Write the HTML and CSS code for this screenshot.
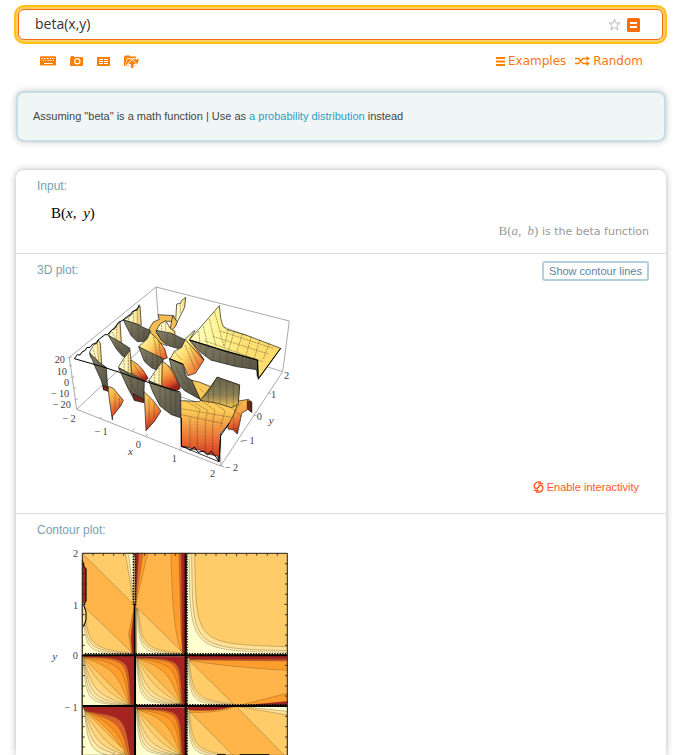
FILE: index.html
```html
<!DOCTYPE html>
<html lang="en">
<head>
<meta charset="utf-8">
<title>beta(x,y)</title>
<link rel="stylesheet" href="styles.css">
</head>
<body>
<header class="top">
  <form class="query">
    <input class="query-input" type="text" value="beta(x,y)" aria-label="Query">
    <button class="icon-button" type="button" aria-label="Add to favorites">
      <svg width="13" height="13" viewBox="0 0 13 13"><path d="M6.5 1L8 5H12L8.8 7.5L10 12L6.5 9.3L3 12L4.2 7.5L1 5H5Z" fill="none" stroke="#bbb"/></svg>
    </button>
    <button class="icon-button" type="submit" aria-label="Compute">
      <svg width="13" height="14" viewBox="0 0 13 14"><rect width="13" height="14" rx="1.5" fill="#ff6d00"/><path d="M3 5H10M3 9H10" stroke="#fff" stroke-width="2"/></svg>
    </button>
  </form>
  <nav class="tools">
    <div class="tool-icons">
      <button class="icon-button" type="button" aria-label="Extended keyboard">
        <svg width="16" height="10" viewBox="0 0 16 10"><rect y=".3" width="16" height="9.2" rx="1" fill="#ff7f00"/><path d="M1.5 2.5H15M2.5 4.5H14" stroke="#fff" stroke-dasharray="1.4 1.3"/><path d="M4 7.5H12.5" stroke="#fff"/></svg>
      </button>
      <button class="icon-button" type="button" aria-label="Image input">
        <svg width="13" height="10" viewBox="0 0 13 10"><path d="M0 2Q0 1 1 1V0H4V1H12Q13 1 13 2V9Q13 10 12 10H1Q0 10 0 9Z" fill="#ff7f00"/><circle cx="7.3" cy="5.3" r="2.6" fill="none" stroke="#fff" stroke-width="1.2"/></svg>
      </button>
      <button class="icon-button" type="button" aria-label="Data input">
        <svg width="13" height="9" viewBox="0 0 13 9"><path d="M0 0H13V9H0Z" fill="#ff7f00"/><path d="M2 2.5H6M7 2.5H11M2 4.5H6M7 4.5H11M2 6.5H6M7 6.5H11" stroke="#fff"/></svg>
      </button>
      <button class="icon-button" type="button" aria-label="File upload">
        <svg width="15" height="13" viewBox="0 0 15 13"><path d="M0 11V2L1.5 .5H5.5L6.5 1.6H12V3.2H3L.8 11Z" fill="#ff7f00"/><path d="M3.4 4.2H15L13 10.8H1.2Z" fill="#ff7f00"/><path d="M8.2 5.5L12 9.3H9.4V12.3H7V9.3H4.4Z" fill="#ff7f00" stroke="#fff" stroke-width="2.2"/><path d="M8.2 5L12 9H9.5V13H6.9V9H4.4Z" fill="#ff7f00"/></svg>
      </button>
    </div>
    <div class="tool-links">
      <a href="#"><svg width="9" height="9" viewBox="0 0 9 9"><path d="M0 1H9M0 4.5H9M0 8H9" stroke="#ff7f00" stroke-width="1.8"/></svg>Examples</a>
      <a href="#"><svg width="15" height="10" viewBox="0 0 15 10"><path d="M0 2.5H3.5L8 7.5H13M0 7.5H3.5L8 2.5H13" fill="none" stroke="#ff7f00" stroke-width="1.4"/><path d="M11.5 0L15 2.5L11.5 5ZM11.5 5L15 7.5L11.5 10Z" fill="#ff7f00"/></svg>Random</a>
    </div>
  </nav>
</header>
<main>
  <section class="assumption">Assuming "beta" is a math function | Use as <a href="#">a probability distribution</a> instead</section>
  <div class="results">
    <section class="pod">
      <h2>Input:</h2>
      <p class="formula">B(<i>x</i>, <i class="arg">y</i>)</p>
      <p class="note"><span class="note-math">B(<i>a</i>, <i class="arg">b</i>)</span> is the beta function</p>
    </section>
    <section class="pod">
      <div class="pod-head"><h2>3D plot:</h2><button class="contour-toggle" type="button">Show contour lines</button></div>
      <div class="pod-row">
        <svg class="plot" width="260" height="210" viewBox="0 0 780 630" role="img" aria-label="3D plot">
          <defs>
            <linearGradient id="cream"><stop stop-color="#ffffcf"/><stop offset=".6" stop-color="#fff2b5"/><stop offset="1" stop-color="#f3c85c"/></linearGradient>
            <linearGradient id="gray" x2="1" y2="1"><stop stop-color="#888467"/><stop offset=".5" stop-color="#6b6753"/><stop offset="1" stop-color="#545044"/></linearGradient>
            <linearGradient id="fire" x2=".3" y2="1"><stop stop-color="#ffd75e"/><stop offset=".45" stop-color="#f6a443"/><stop offset=".8" stop-color="#df572a"/><stop offset="1" stop-color="#9f2518"/></linearGradient>
            <linearGradient id="side" x2="1" y2=".7"><stop stop-color="#ffffc8"/><stop offset=".5" stop-color="#ffdc6b"/><stop offset="1" stop-color="#e8652a"/></linearGradient>
            <linearGradient id="slab"><stop stop-color="#ffffc5"/><stop offset=".35" stop-color="#fff391"/><stop offset=".6" stop-color="#ffe173"/><stop offset="1" stop-color="#ffd968"/></linearGradient>
            <linearGradient id="fade" x2="0" y2="1"><stop stop-color="#66634c"/><stop offset=".6" stop-color="#8d8155"/><stop offset="1" stop-color="#f7c457"/></linearGradient>
            <linearGradient id="front" x2="0" y2="1"><stop stop-color="#ffd95f"/><stop offset=".4" stop-color="#fcc957"/><stop offset=".75" stop-color="#e96b32"/><stop offset="1" stop-color="#c52a1e"/></linearGradient>
          </defs>
          <g class="box"><path d="M88 232L348 21L748 123L728 275L542 558L110 388ZM348 21L355 115M110 388L305 205M728 275L600 235M542 558V440M420 350L540 390M83 232H94M88 257H96M94 291H103M99 324H108M104 358H113M184 417L180 411M278 452L284 445M318 470L322 462M424 510L420 503M542 558L552 560M600 483L610 486M640 405L650 408M684 338L694 341"/></g>
          <g class="mesh">
            <path d="M406 138L410 72L422 70L424 62L437 52L434 82L426 98L412 125Z" fill="url(#cream)"/>
            <path d="M328 145L340 126L358 118L354 104L402 107V124L374 124L348 158L382 198L334 178Z" fill="#f2bd52"/>
            <path d="M398 108L412 125L406 140L388 158Z" fill="#f2bd52"/>
            <path d="M448 180L538 77L542 114L548 136L560 148L620 166L722 205L655 298L652 240Z" fill="url(#slab)"/>
            <path d="M449 180L550 212L654 241L652 290L650 269L590 260L512 240L481 216Z" fill="url(#gray)"/>
            <path d="M250 120L267 110L275 104L280 95L300 78L304 136Z" fill="url(#cream)"/>
            <path d="M250 120L278 128L330 151V158L316 184L292 185L274 168Z" fill="url(#gray)"/>
            <path d="M206 166L214 152L228 137L240 124L244 188L216 180Z" fill="url(#cream)"/>
            <path d="M205 166L242 187L270 205L266 237L247 228L229 207Z" fill="url(#gray)"/>
            <path d="M348 153L360 132L377 122L391 145L405 154L404 172Z" fill="url(#cream)"/>
            <path d="M348 151L392 159L435 179L433 211L388 198L363 180Z" fill="url(#gray)"/>
            <path d="M296 200L322 176L330 157L352 177L374 206L382 234L362 241Z" fill="url(#side)"/>
            <path d="M296 200L328 216L370 236L362 275L334 263L313 244Z" fill="url(#gray)"/>
            <path d="M390 237L403 214L425 202L436 178L464 205L492 240L466 280L444 287L429 252Z" fill="url(#side)"/>
            <path d="M435 178L461 153L465 152L448 180L480 220L492 240Z" fill="url(#side)"/>
            <path d="M388 236L429 253L440 291L464 306L482 359L434 332L402 298Z" fill="url(#gray)"/>
            <path d="M455 301L477 306L515 321L507 333L482 360Z" fill="#f9c956"/>
            <path d="M149 216L160 197L174 180L181 190L185 256L151 231Z" fill="url(#cream)"/>
            <path d="M149 219L180 249L199 262L203 324L191 329L184 302L165 260Z" fill="url(#gray)"/>
            <path d="M190 329L190 316L203 321L204 334Z" fill="#7a2418"/>
            <path d="M205 319L220 325L250 361L242 378L218 408L217 420L207 352Z" fill="url(#fire)"/>
            <path d="M235 262L250 237L270 211L273 241L276 286Z" fill="url(#cream)"/>
            <path d="M273 240L292 252L309 270L324 294L315 306L274 278Z" fill="url(#fire)"/>
            <path d="M236 264L275 283L313 304L311 366L283 360L263 323Z" fill="url(#gray)"/>
            <path d="M279 340L311 358V368L283 361Z" fill="#7a2418"/>
            <path d="M312 335L340 362L363 393L344 423L318 452L314 369Z" fill="url(#fire)"/>
            <path d="M326 302L344 276L367 244L372 318L365 320Z" fill="url(#cream)"/>
            <path d="M367 243L391 262L405 285L421 325L410 332L365 320Z" fill="url(#fire)"/>
            <path d="M326 302L365 318L422 341L424 414L394 404L360 378L338 335Z" fill="url(#gray)"/>
            <path d="M590 364L625 358L635 366V397L624 388L605 400L599 430L592 462L579 449L564 447L562 410Z" fill="url(#fire)"/>
            <path d="M622 362L635 366V397L622 386Z" fill="#6b2a18"/>
            <path d="M422 362L479 365L532 292L599 315L594 366L582 402L568 429L542 460L537 545L424 498Z" fill="url(#front)"/>
            <path d="M480 361L507 331L531 291L599 315L595 373L574 383L533 370Z" fill="url(#fade)"/>
            <path d="M425 499L444 502L458 508L480 510L503 522L533 528L537 545Z" fill="#fff"/>
          </g>
          <g class="grid">
            <path d="M476 153L482 207M490 138L505 206M508 117L528 199M524 96L552 199M548 140L620 166M540 153L700 205M518 169L686 222M493 182L669 245M565 148L552 203M583 154L565 213M608 161L590 217M634 169L618 226M660 178L642 237M688 188L670 238"/>
            <path d="M424 386L575 412M423 404L548 430M434 360L480 388L472 418V506M457 365L503 391L496 425V515M485 363L524 390L518 432V522M525 370L555 392L542 440M450 415V502M573 382L607 411M607 365L584 395M581 405V449M480 326L493 339M425 260L462 348M408 261L447 330M435 195L466 270M449 201L478 258M403 215L427 241"/>
            <path d="M497 202V232M519 210V244M540 215V249M562 220V253M584 226V259M606 233V262M630 238V266M505 330V371M520 306V368M540 298V372M560 303V380M580 309V382M360 320V372M376 325V388M392 330V403M407 336V408M260 277L288 339M274 285V342M293 296V361M160 210L170 243M172 190L176 246M216 155L227 178M230 138V183M266 114V127M281 99V130M292 88V132M245 205V223M226 186L242 215M275 134V164M295 142V181M312 150V181M341 171L352 230M356 182L363 237M318 218V246M337 225V262M352 233V270M252 240V270M265 222V275M344 281V309M357 263V315M384 258L415 310M280 250L310 297M225 340V390M238 354V379M327 358V426M343 370V412M365 135V152M377 127V154M381 162V190M405 172V199M421 74V99"/>
          </g>
          <path class="edge" d="M103 236L112 224L120 225L126 216L136 211L140 203L150 202L158 192L169 191L175 180M174 180L195 164L203 164L216 149L223 147L235 128L249 120L262 109L270 105L278 94L291 90L298 74M103 236L180 258L248 280L315 304L422 337M449 180L550 212L652 240L655 296L722 205M388 236L429 253M424 414L424 500L440 502L450 511L463 501L475 517L490 513L502 525L514 514L528 531L537 545L542 467L568 430"/>
          <g class="tick-labels"><text x="44" y="248">20</text><text x="50" y="284">10</text><text x="72" y="317">0</text><text x="33" y="351">−&#8201;10</text><text x="38" y="384">−&#8201;20</text><text x="68" y="426">−&#8201;2</text><text x="164" y="465">−&#8201;1</text><text x="287" y="504">0</text><text x="395" y="545">1</text><text x="510" y="590">2</text><text x="555" y="573">−&#8201;2</text><text x="605" y="492">−&#8201;1</text><text x="650" y="419">0</text><text x="693" y="353">1</text><text x="732" y="298">2</text><text class="axis" x="264" y="525">x</text><text class="axis" x="686" y="431">y</text></g>
        </svg>
        <a class="interactive" href="#"><svg width="11" height="12" viewBox="0 0 11 12"><path d="M8 1Q2.5 .2 1.2 4.3Q.8 7.6 4 7.4Q6 6.6 5.4 4.9M3 11Q8.5 11.8 9.8 7.7Q10.2 4.5 7 4.4Q5 5.2 5.7 7.1M10 2.8Q7.5 2 5.5 3M1 9.2Q3.5 10 5.5 9" fill="none" stroke="#ff5a1f" stroke-width="1.4"/></svg>Enable interactivity</a>
      </div>
    </section>
    <section class="pod">
      <h2>Contour plot:</h2>
      <svg class="plot" width="260" height="215" viewBox="0 0 780 645" role="img" aria-label="Contour plot">
        <defs>
          <symbol id="fan" viewBox="0 0 156 152" overflow="visible">
            <path d="M0 0H156V152H0Z" fill="#a52422" stroke="none"/>
            <path d="M4 5C155 8 136 10 146 150L0 152V0Z" fill="#d9602b"/>
            <path d="M4 6C145 12 129 18 144 149L0 152V0Z" fill="#f98d22"/>
            <path d="M4 7C132 22 122 48 142 148L0 152V0Z" fill="#ff9e2d"/>
            <path d="M4 8C105 35 112 80 141 147L0 152V0Z" fill="#ffb54a"/>
            <path d="M4 8L141 147L0 152V0Z" fill="#ffcc69"/>
            <path d="M4 9C47 85 80 115 141 147L0 152V0Z" fill="#ffd67c"/>
            <path d="M4 9C30 105 48 123 139 148L0 152V0Z" fill="#ffe199"/>
            <path d="M4 9C22 118 34 133 138 149L0 152V0Z" fill="#ffeaaa"/>
            <path d="M3 9C17 129 21 140 137 150L0 152V0Z" fill="#fff3bb"/>
            <path d="M2 9C12 140 13 144 134 151L0 152V0Z" fill="#ffffcf"/>
          </symbol>
          <symbol id="corner" viewBox="0 0 156 152" overflow="visible">
            <path d="M6 6C16 118 24 134 143 145L156 152H0V0Z" fill="#ffe095"/>
            <path d="M5 20C12 126 20 139 136 147L156 152H0V0Z" fill="#ffebad"/>
            <path d="M3 30C9 138 16 145 128 149L156 152H0V0Z" fill="#ffffcf"/>
          </symbol>
        </defs>
        <g class="contours">
          <path d="M127 40H283V345H127Z" fill="#ffb54a"/>
          <path d="M127 40H283V195ZM127 195L276 338L283 345H127Z" fill="#ffcc69"/>
          <path d="M256 40L281 190L283 40Z" fill="#ffe095"/><path d="M266 40L281 180V40Z" fill="#ffffcf"/>
          <path d="M283 200L266 281L274 335H283Z" fill="#f98d22"/><path d="M283 200L273 290L276 340H285Z" fill="#a52422"/>
          <use href="#corner" x="127" y="193" width="156" height="152"/>
          <path d="M127 70L133 82L138 86V183L132 195L138 216V238L133 255H127Z" fill="#ffe095"/><path d="M127 60L133 82L138 84V183L131 190H127Z" fill="#a52422"/>
          <path class="seam" d="M127 60L133 82L138 86V183L131 195L138 216V238L133 255L128 262"/>
          <path d="M287 40H437V345H287Z" fill="#ffb54a"/><path d="M283 195L425 335L437 345H287Z" fill="#ffcc69"/>
          <use href="#corner" x="287" y="205" width="150" height="140"/>
          <path d="M287 40H323L287 193Z" fill="#ff9e2d"/><path d="M287 40H309L286 190Z" fill="#e56b29"/><path d="M287 40H297L286 180Z" fill="#a52422"/>
          <path d="M393 40C396 190 404 289 425 336H437V40Z" fill="#ff9e2d"/><path d="M417 40L423 280L429 339H437V40Z" fill="#d9602b"/><path d="M424 40L427 340H437V40Z" fill="#a52422"/>
          <path d="M440 40H742V345H440Z" fill="#ffcc69"/><path d="M464 40C469 312 462 311 742 320V345H440V40Z" fill="#ffe095"/><path d="M455 40C459 325 448 324 742 332V345H440V40Z" fill="#ffebad"/><path d="M447 40C450 334 446 332 742 337V345H440V40Z" fill="#ffffcf"/>
          <use href="#fan" x="127" y="346" width="156" height="152"/><use href="#fan" x="287" y="346" width="150" height="152"/>
          <path d="M440 345H742V498H440Z" fill="#ffb54a"/><path d="M440 345H742V391Q540 379 446 360Z" fill="#ff9e2d"/><path d="M440 345H742V363Q540 361 446 359Z" fill="#d9602b"/><path d="M440 345H742V358H440Z" fill="#a52422"/>
          <path d="M446 360L586 498H440Z" fill="#ffcc69"/><use href="#corner" x="442" y="351" width="150" height="147"/>
          <path d="M590 498L742 460V498Z" fill="#ff9e2d"/><path d="M605 497L742 484V498Z" fill="#a52422"/>
          <path d="M127 499H283V645H127Z" fill="#a52422"/>
          <path d="M133 512C250 535 252 520 271 645H127V499Z" fill="#d9602b"/>
          <path d="M133 512C240 545 240 550 266 645H127V499Z" fill="#f98d22"/>
          <path d="M133 512C222 550 240 590 262 645H127V499Z" fill="#ff9e2d"/>
          <path d="M133 512C205 560 232 600 258 645H127V499Z" fill="#ffb54a"/>
          <path d="M133 512L250 628L256 645H127V499Z" fill="#ffcc69"/>
          <path d="M133 512C175 580 195 610 254 640L240 645H127V499Z" fill="#ffd67c"/>
          <path d="M133 512C160 590 175 620 245 640L230 645H127V499Z" fill="#ffe199"/>
          <path d="M133 512C150 600 160 625 225 640L215 645H127V499Z" fill="#ffeaaa"/>
          <path d="M133 512C143 610 150 630 200 645H127V499Z" fill="#ffffcf"/>
          <use href="#fan" x="287" y="499" width="150" height="152"/>
          <path d="M440 499H742V645H440Z" fill="#ffb54a"/><path d="M590 500H742V645H732ZM446 512L578 645H440Z" fill="#ffcc69"/>
          <path d="M440 499H588Q540 520 446 517Z" fill="#ff9e2d"/><path d="M440 499H580Q530 516 446 510Z" fill="#a52422"/>
          <path d="M592 499H742V525Z" fill="#ffe095"/><path d="M605 499H742V514Z" fill="#ffffcf"/><use href="#corner" x="442" y="505" width="150" height="148"/>
        </g>
        <path class="pole" d="M127 346H742M127 498H742M285 345V645M437 40V645"/>
        <path class="pole-thin" d="M284 190V345"/>
        <path class="pole-dots" d="M280 40V195M287 40V195M441 40V645M135 341H742M288 494H742"/>
        <path d="M531 644H557M599 644H688" stroke="#000" stroke-width="3"/>
        <path class="frame" d="M127 645V40H742V645M159 40V47M190 40V47M221 40V47M251 40V47M283 40V49M314 40V47M345 40V47M375 40V47M406 40V47M436 40V49M467 40V47M498 40V47M528 40V47M559 40V47M590 40V49M620 40V47M650 40V47M682 40V47M712 40V47M127 71H134M127 101H134M127 132H134M127 163H134M127 193H136M127 224H134M127 255H134M127 285H134M127 316H134M127 376H134M127 407H134M127 438H134M127 468H134M127 529H134M127 560H134M127 591H134M127 621H134M742 71H735M742 101H735M742 132H735M742 163H735M742 193H733M742 224H735M742 255H735M742 285H735M742 316H735M742 376H735M742 407H735M742 438H735M742 468H735M742 529H735M742 560H735M742 591H735M742 621H735"/>
        <g class="tick-labels"><text x="99" y="50">2</text><text x="99" y="206">1</text><text x="98" y="358">0</text><text x="74" y="512">−&#8201;1</text><text class="axis" x="37" y="360">y</text></g>
      </svg>
    </section>
  </div>
</main>
</body>
</html>
```
FILE: styles.css
```css
* { box-sizing: border-box; }
body {
  margin: 0;
  min-height: 100vh;
  display: flex;
  flex-direction: column;
  background: #fff;
  color: #444;
  font: 11px/16px "Liberation Sans", Arial, sans-serif;
}
a { text-decoration: none; }
svg { display: block; flex: none; }
h2, p { margin: 0; font-weight: normal; }
.top { padding: 9px 16px 0 18px; }
.query {
  display: flex;
  align-items: center;
  gap: 6px;
  height: 31px;
  padding: 0 22px 0 16px;
  border: 1px solid #f56b0b;
  border-radius: 6px;
  box-shadow: 0 0 0 2px #ffcc66, 0 0 0 4px #ffc20e;
}
.query-input {
  flex: 1;
  min-width: 0;
  height: 22px;
  padding: 0 0 2px;
  border: 0;
  outline: 0;
  background: none;
  color: #333;
  font: 14px/20px "Open Sans", sans-serif;
}
.icon-button { padding: 0; border: 0; background: none; cursor: pointer; }
.tools {
  display: flex;
  align-items: center;
  justify-content: space-between;
  height: 16px;
  margin: 13px 20px 0 22px;
}
.tool-icons { display: flex; align-items: center; gap: 14px; }
.tool-links { display: flex; gap: 9px; }
.tool-links a {
  display: flex;
  align-items: center;
  gap: 3px;
  color: #ff7411;
  font: 12px/16px "DejaVu Sans", Verdana, sans-serif;
}
main {
  flex: 1;
  display: flex;
  flex-direction: column;
  gap: 28px;
  padding: 22px 13px 0 16px;
}
.assumption {
  padding: 15px 15px 16px;
  border: 2px solid #c7dde5;
  border-radius: 8px;
  background: #f0f6f6;
  box-shadow: 0 0 7px rgba(0, 0, 0, .22);
}
.assumption a { color: #2f9bc4; }
.results {
  flex: 1;
  border-radius: 8px 8px 0 0;
  box-shadow: 0 0 7px rgba(0, 0, 0, .3);
}
.pod { padding: 8px 17px 0 21px; }
.pod + .pod { border-top: 1px solid #dcdcdc; }
.pod h2 { color: #7b9eb2; font-size: 12px; line-height: 16px; }
.formula {
  margin: 9px 0 0 14px;
  color: #000;
  font: 15px/20px "Liberation Serif", serif;
}
.arg { margin-left: 3px; }
.note {
  padding-bottom: 13px;
  color: #999;
  font: 11px/16px "DejaVu Sans", sans-serif;
  text-align: right;
}
.note-math { font: 13px/16px "Liberation Serif", serif; }
.pod-head {
  display: flex;
  align-items: center;
  justify-content: space-between;
  height: 18px;
}
.pod-head h2 { height: 18px; }
.contour-toggle {
  height: 20px;
  padding: 0 5px;
  border: 2px solid #b2d1dc;
  border-radius: 3px;
  background: #fff;
  color: #5c8799;
  font: 11px/14px "Liberation Sans", Arial, sans-serif;
}
.pod-row {
  display: flex;
  justify-content: space-between;
  align-items: flex-end;
  padding: 0 10px 18px 0;
}
.pod-row .plot { margin-bottom: 5px; }
.plot { margin-left: 3px; }
h2 + .plot { margin-top: 2px; }
.interactive { display: flex; align-items: center; gap: 3px; color: #ff5a1f; }
.box { fill: none; stroke: #aaa; stroke-width: 3; }
.mesh { stroke: #171717; stroke-width: 2; stroke-linejoin: round; }
.grid { fill: none; stroke: #3a3020; stroke-width: 2; stroke-dasharray: 7 2; opacity: .6; }
.edge { fill: none; stroke: #000; stroke-width: 3; }
.tick-labels { fill: #444; font: 31px "Liberation Serif", serif; }
.axis { font-size: 33px; font-style: italic; }
.contours { stroke: #604a20; stroke-width: 1; }
.seam { fill: none; stroke: #000; stroke-width: 3; }
.pole { fill: none; stroke: #000; stroke-width: 6; }
.pole-thin { stroke: #000; stroke-width: 5; }
.pole-dots { fill: none; stroke: #000; stroke-width: 4; stroke-dasharray: 4 4; }
.frame { fill: none; stroke: #332b20; stroke-width: 3; }
```
